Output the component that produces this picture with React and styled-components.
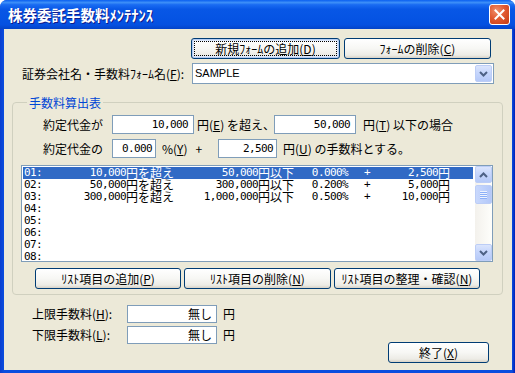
import styled, { createGlobalStyle, css } from 'styled-components';

const jp = `"Noto Sans CJK JP", sans-serif`;
const mono = `"DejaVu Sans Mono", "Noto Sans CJK JP", monospace`;

const GlobalStyle = createGlobalStyle`
  html, body { margin: 0; padding: 0; background: #ffffff; }
  body { font-family: ${jp}; font-size: 12px; color: #000; }
`;

const Window = styled.div`
  width: 515px;
  height: 373px;
  display: flex;
  flex-direction: column;
  border-radius: 7px 7px 0 0;
  overflow: hidden;
  background: #0a46d8;
`;

const TitleBar = styled.div`
  height: 29px;
  flex: none;
  display: flex;
  align-items: center;
  padding: 0 5px 0 8px;
  background: linear-gradient(180deg, #0a5ff0 0%, #3d8ff8 9%, #1a6cf2 16%, #0857e6 32%, #0553e3 70%, #0550e0 86%, #0343c8 100%);
`;

const Title = styled.span`
  color: #fff;
  font: bold 14.5px/16px ${jp};
  text-shadow: 1px 1px 0 #0f1c8c;
`;

const CloseBtn = styled.div`
  margin-left: auto;
  width: 21px;
  height: 21px;
  box-sizing: border-box;
  border: 1px solid #fff;
  border-radius: 3px;
  background: radial-gradient(circle at 35% 30%, #f0906c 0%, #e15a32 45%, #c53a12 100%);
  display: flex;
  align-items: center;
  justify-content: center;
`;

const Frame = styled.div`
  flex: 1;
  display: flex;
  padding: 0 3px 3px 4px;
  background: linear-gradient(90deg, #0a3ecf 0px, #0a4ddf 4px, #0a4ddf calc(100% - 3px), #0021b8 100%);
`;

const Client = styled.div`
  flex: 1;
  display: flex;
  flex-direction: column;
  background: #ece9d8;
`;

const U = styled.span`
  text-decoration: underline;
  text-underline-offset: 1px;
`;

const Btn = styled.button`
  box-sizing: border-box;
  width: ${p => p.$w}px;
  height: 21px;
  padding: 0;
  margin: 0;
  border: 1px solid #003c74;
  border-radius: 3px;
  background: linear-gradient(180deg, #ffffff 0%, #f7f7f4 50%, #ecebe5 85%, #d8d2c6 100%);
  font: 12px/19px ${jp};
  color: #000;
  white-space: nowrap;
  ${p => p.$default && css`
    box-shadow: inset 0 0 0 1px #b5cdf3, inset 0 0 0 2px #dde8fb;
    outline: 1px dotted #000;
    outline-offset: -4px;
  `}
`;

const TopBar = styled.div`
  display: flex;
  justify-content: flex-end;
  gap: 4px;
  padding: 9px 21px 0 0;
`;

const ComboRow = styled.div`
  display: flex;
  align-items: center;
  margin-top: 4px;
  padding-left: 18px;
`;

const FieldLabel = styled.span`
  width: ${p => p.$w}px;
  flex: none;
  font: 12px/14px ${jp};
  white-space: nowrap;
`;

const Combo = styled.div`
  box-sizing: border-box;
  width: 302px;
  height: 21px;
  border: 1px solid #7f9db9;
  background: #fff;
  display: flex;
  align-items: center;
  padding: 1px;
`;

const ComboText = styled.span`
  flex: 1;
  padding-left: 1px;
  font: 11px/17px "Liberation Sans", sans-serif;
`;

const ArrowBtn = styled.div`
  width: 17px;
  height: 17px;
  box-sizing: border-box;
  border: 1px solid #bccdf6;
  border-radius: 2px;
  background: linear-gradient(180deg, #dbe5fd 0%, #c6d6fc 45%, #b5c9f8 100%);
  display: flex;
  align-items: center;
  justify-content: center;
`;

const Group = styled.fieldset`
  margin: 12px 9px 0 8px;
  padding: 0 9px 5px 8px;
  border: 1px solid #d0d0bf;
  border-radius: 4px;
  min-width: 0;
`;

const Legend = styled.legend`
  margin-left: 6px;
  padding: 0 2px;
  color: #0046d5;
  font: 12px/13px ${jp};
`;

const CalcRow = styled.div`
  display: flex;
  align-items: center;
  height: 19px;
  margin-top: ${p => p.$top}px;
  padding-left: 22px;
`;

const Caption = styled.span`
  flex: none;
  width: ${p => (p.$w ? `${p.$w}px` : 'auto')};
  margin-left: ${p => p.$ml || 0}px;
  font: 12px/14px ${jp};
  white-space: nowrap;
`;

const Plus = styled.span`
  margin-left: 8px;
`;

const NumInput = styled.div`
  box-sizing: border-box;
  flex: none;
  width: ${p => p.$w}px;
  height: ${p => p.$h || 19}px;
  border: 1px solid #7f9db9;
  background: #fff;
  padding-right: ${p => p.$pr || 5}px;
  text-align: right;
  font: 11px/${p => (p.$h || 19) - 2}px ${mono};
  letter-spacing: -0.6px;
  white-space: nowrap;
`;

const TextInput = styled(NumInput)`
  font: 12px/${p => (p.$h || 19) - 2}px ${jp};
  letter-spacing: 0;
`;

const ListBox = styled.div`
  box-sizing: border-box;
  height: 97px;
  margin-top: 7px;
  border: 1px solid #7f9db9;
  background: #fff;
  display: flex;
  overflow: hidden;
`;

const Rows = styled.div`
  flex: 1;
  padding: 1px 2px 0 1px;
  overflow: hidden;
`;

const ListRow = styled.div`
  display: flex;
  height: 12px;
  padding-left: 1px;
  background: ${p => (p.$sel ? '#316ac5' : 'transparent')};
  color: ${p => (p.$sel ? '#fff' : '#000')};
`;

const Cell = styled.span`
  flex: none;
  width: ${p => p.$w}px;
  text-align: ${p => p.$align || 'right'};
  font: 11px/12px ${mono};
  letter-spacing: -0.6px;
  white-space: nowrap;
`;

const JpCell = styled.span`
  flex: none;
  width: ${p => p.$w}px;
  font: 12px/12px ${jp};
  white-space: nowrap;
`;

const ScrollBar = styled.div`
  width: 17px;
  flex: none;
  display: flex;
  flex-direction: column;
  background: linear-gradient(90deg, #f3f1ec 0%, #fefefb 100%);
`;

const ScrollTrack = styled.div`
  flex: 1;
  padding-top: 2px;
`;

const Thumb = styled.div`
  box-sizing: border-box;
  height: 19px;
  border: 1px solid #bccdf6;
  border-radius: 2px;
  background: linear-gradient(90deg, #c9d8fc 0%, #bdd0fb 50%, #b4c8f8 100%);
  display: flex;
  flex-direction: column;
  align-items: center;
  justify-content: center;
  gap: 1px;
`;

const Grip = styled.span`
  width: 7px;
  height: 1px;
  background: #eef3fe;
  box-shadow: 0 1px 0 #8cb0f8;
`;

const ListButtons = styled.div`
  display: flex;
  gap: 3px;
  margin-top: 6px;
  padding-left: 14px;
`;

const Bottom = styled.div`
  display: flex;
  align-items: flex-start;
  margin-top: 10px;
  padding: 0 23px 0 28px;
`;

const LimitCol = styled.div`
  display: flex;
  flex-direction: column;
  gap: 3px;
`;

const LimitRow = styled.div`
  display: flex;
  align-items: center;
`;

const ExitBtn = styled(Btn)`
  margin: 37px 0 0 auto;
`;

const Chevron = ({ up }) => (
  <svg width="9" height="6" viewBox="0 0 9 6">
    <path
      d={up ? 'M1 5 L4.5 1.5 L8 5' : 'M1 1 L4.5 4.5 L8 1'}
      fill="none"
      stroke="#4d6185"
      strokeWidth="2"
    />
  </svg>
);

const rows = [
  { no: '01', a: '10,000', b: '50,000', r: '0.000%', f: '2,500' },
  { no: '02', a: '50,000', b: '300,000', r: '0.200%', f: '5,000' },
  { no: '03', a: '300,000', b: '1,000,000', r: '0.500%', f: '10,000' },
  { no: '04' },
  { no: '05' },
  { no: '06' },
  { no: '07' },
  { no: '08' },
];

const App = () => (
  <>
    <GlobalStyle />
    <Window>
      <TitleBar>
        <Title>株券委託手数料ﾒﾝﾃﾅﾝｽ</Title>
        <CloseBtn>
          <svg width="11" height="11" viewBox="0 0 11 11">
            <path d="M1.5 1.5 L9.5 9.5 M9.5 1.5 L1.5 9.5" stroke="#fff" strokeWidth="2" strokeLinecap="square" />
          </svg>
        </CloseBtn>
      </TitleBar>
      <Frame>
        <Client>
          <TopBar>
            <Btn $w={149} $default>新規ﾌｫｰﾑの追加(<U>D</U>)</Btn>
            <Btn $w={147}>ﾌｫｰﾑの削除(<U>C</U>)</Btn>
          </TopBar>

          <ComboRow>
            <FieldLabel $w={170}>証券会社名・手数料ﾌｫｰﾑ名(<U>F</U>):</FieldLabel>
            <Combo>
              <ComboText>SAMPLE</ComboText>
              <ArrowBtn><Chevron /></ArrowBtn>
            </Combo>
          </ComboRow>

          <Group>
            <Legend>手数料算出表</Legend>
            <CalcRow $top={6}>
              <Caption $w={69}>約定代金が</Caption>
              <NumInput $w={82}>10,000</NumInput>
              <Caption $w={77} $ml={3}>円(<U>E</U>) を超え、</Caption>
              <NumInput $w={82}>50,000</NumInput>
              <Caption $ml={7}>円(<U>T</U>) 以下の場合</Caption>
            </CalcRow>
            <CalcRow $top={5}>
              <Caption $w={69}>約定代金の</Caption>
              <NumInput $w={44} $pr={3}>0.000</NumInput>
              <Caption $w={56} $ml={6}>%(<U>Y</U>)<Plus>+</Plus></Caption>
              <NumInput $w={59} $pr={3}>2,500</NumInput>
              <Caption $ml={6}>円(<U>U</U>) の手数料とする。</Caption>
            </CalcRow>

            <ListBox>
              <Rows>
                {rows.map((r, i) => (
                  <ListRow key={r.no} $sel={i === 0}>
                    <Cell $w={24} $align="left">{r.no}:</Cell>
                    {r.a && (
                      <>
                        <Cell $w={78}>{r.a}</Cell>
                        <JpCell $w={48}>円を超え</JpCell>
                        <Cell $w={84}>{r.b}</Cell>
                        <JpCell $w={36}>円以下</JpCell>
                        <Cell $w={54}>{r.r}</Cell>
                        <Cell $w={22}>+</Cell>
                        <Cell $w={68}>{r.f}</Cell>
                        <JpCell $w={12}>円</JpCell>
                      </>
                    )}
                  </ListRow>
                ))}
              </Rows>
              <ScrollBar>
                <ArrowBtn><Chevron up /></ArrowBtn>
                <ScrollTrack>
                  <Thumb>
                    <Grip /><Grip /><Grip /><Grip />
                  </Thumb>
                </ScrollTrack>
                <ArrowBtn><Chevron /></ArrowBtn>
              </ScrollBar>
            </ListBox>

            <ListButtons>
              <Btn $w={146}>ﾘｽﾄ項目の追加(<U>P</U>)</Btn>
              <Btn $w={147}>ﾘｽﾄ項目の削除(<U>N</U>)</Btn>
              <Btn $w={146}>ﾘｽﾄ項目の整理・確認(<U>N</U>)</Btn>
            </ListButtons>
          </Group>

          <Bottom>
            <LimitCol>
              <LimitRow>
                <Caption $w={95}>上限手数料(<U>H</U>):</Caption>
                <TextInput $w={90} $h={18} $pr={4}>無し</TextInput>
                <Caption $ml={6}>円</Caption>
              </LimitRow>
              <LimitRow>
                <Caption $w={95}>下限手数料(<U>L</U>):</Caption>
                <TextInput $w={90} $h={18} $pr={4}>無し</TextInput>
                <Caption $ml={6}>円</Caption>
              </LimitRow>
            </LimitCol>
            <ExitBtn $w={101}>終了(<U>X</U>)</ExitBtn>
          </Bottom>
        </Client>
      </Frame>
    </Window>
  </>
);

export default App;
